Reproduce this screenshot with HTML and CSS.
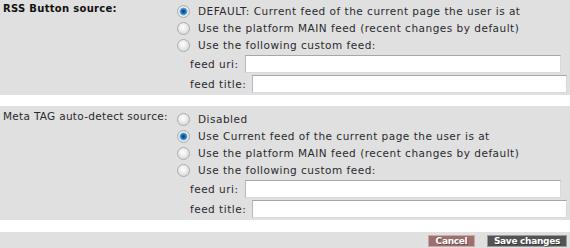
FILE: index.html
```html
<!DOCTYPE html>
<html lang="en">
<head>
    <meta charset="UTF-8">
    <title>RSS settings</title>
    <link rel="stylesheet" href="styles.css">
</head>
<body>
    <form class="settings">
        <div class="panel">
            <div class="panel-label bold">RSS Button source:</div>
            <div class="options">
                <label class="option"><input type="radio" name="rss" checked> DEFAULT: Current feed of the current page the user is at</label>
                <label class="option"><input type="radio" name="rss"> Use the platform MAIN feed (recent changes by default)</label>
                <label class="option"><input type="radio" name="rss"> Use the following custom feed:</label>
                <div class="feed-row">
                    <span>feed uri:</span>
                    <input type="text" class="feed-input short">
                </div>
                <div class="feed-row">
                    <span>feed title:</span>
                    <input type="text" class="feed-input">
                </div>
            </div>
        </div>

        <div class="panel">
            <div class="panel-label">Meta TAG auto-detect source:</div>
            <div class="options lower">
                <label class="option"><input type="radio" name="meta"> Disabled</label>
                <label class="option"><input type="radio" name="meta" checked> Use Current feed of the current page the user is at</label>
                <label class="option"><input type="radio" name="meta"> Use the platform MAIN feed (recent changes by default)</label>
                <label class="option"><input type="radio" name="meta"> Use the following custom feed:</label>
                <div class="feed-row">
                    <span>feed uri:</span>
                    <input type="text" class="feed-input short">
                </div>
                <div class="feed-row">
                    <span>feed title:</span>
                    <input type="text" class="feed-input">
                </div>
            </div>
        </div>

        <div class="actions">
            <button type="button" class="btn btn-cancel">Cancel</button>
            <button type="submit" class="btn btn-save">Save changes</button>
        </div>
    </form>
</body>
</html>
```

FILE: styles.css
```css
:root {
    --panel: #e0e0e0;
    --text: #2a2a2e;
}

* {
    box-sizing: border-box;
    margin: 0;
    padding: 0;
}

body {
    background: #fff;
    color: var(--text);
    font-family: 'DejaVu Sans', Verdana, sans-serif;
    font-size: 10.5px;
    letter-spacing: 0.5px;
    line-height: 17px;
}

.settings {
    width: 570px;
}

.panel {
    display: grid;
    grid-template-columns: 177px 1fr;
    background: var(--panel);
    margin-bottom: 11px;
    padding-bottom: 1px;
}

.panel-label {
    padding: 0 0 0 3px;
    white-space: nowrap;
    letter-spacing: 0.3px;
}

.bold {
    font-weight: bold;
    font-size: 10px;
    color: #111;
}

.options {
    padding-top: 3px;
}

.options.lower {
    padding-top: 5px;
}

.panel + .panel .panel-label {
    padding-top: 2px;
}

.option {
    display: flex;
    align-items: center;
    height: 17px;
    gap: 8px;
    white-space: nowrap;
}

.option input {
    appearance: none;
    width: 13px;
    height: 13px;
    border-radius: 50%;
    border: 1px solid #acacac;
    background: radial-gradient(circle at 45% 40%, #fff 0, #f0f0f0 35%, #cacaca 100%);
    flex: none;
}

.option input:checked {
    background: radial-gradient(circle at 50% 50%, #0b3a6a 0, #1b6bb5 2px, #5fa8dc 3.5px, #e8f0f6 4.3px, #f2f2f2 45%, #cacaca 100%);
}

.feed-row {
    display: flex;
    align-items: center;
    gap: 6px;
    padding-left: 13px;
    padding-right: 3px;
    margin-bottom: 1px;
}

.feed-row span {
    white-space: nowrap;
    padding-top: 2px;
}

.feed-input {
    flex: 1;
    height: 18px;
    border: 1px solid;
    border-color: #a7a7a7 #d6dae0 #d6dae0 #b8b8b8;
    background: #fff;
    font: inherit;
}

.feed-input.short {
    margin-right: 6px;
}

.actions {
    display: flex;
    justify-content: flex-end;
    gap: 12px;
    background: var(--panel);
    padding: 3px 3px 6px;
    margin-top: 12px;
}

.btn {
    height: 12px;
    border: 1px solid;
    color: #fff;
    font-family: 'DejaVu Sans', Verdana, sans-serif;
    font-size: 9px;
    font-weight: bold;
    line-height: 10px;
    letter-spacing: -0.3px;
    text-shadow: 1px 1px 0 rgba(0, 0, 0, 0.35);
}

.btn-cancel {
    width: 47px;
    background: #9e6f6f;
    border-color: #c9a8a8;
}

.btn-save {
    width: 80px;
    background: #535353;
    border-color: #9a9a9a;
}
```
